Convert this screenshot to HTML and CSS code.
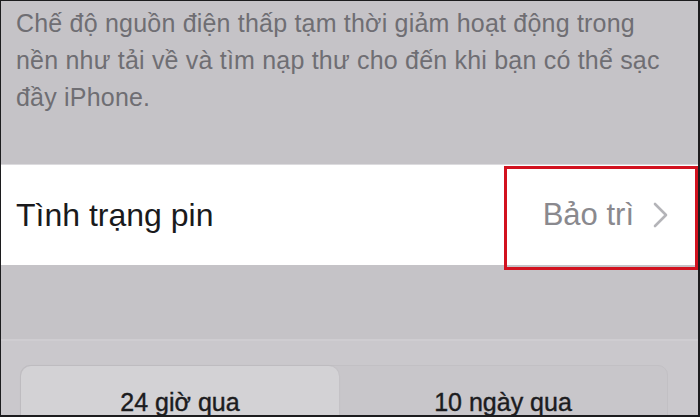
FILE: index.html
```html
<!DOCTYPE html>
<html lang="vi">
<head>
<meta charset="utf-8">
<link rel="stylesheet" href="styles.css">
</head>
<body>
<div class="screen">
  <p class="desc">Chế độ nguồn điện thấp tạm thời giảm hoạt động trong<br>nền như tải về và tìm nạp thư cho đến khi bạn có thể sạc<br>đầy iPhone.</p>
  <div class="row">
    <span class="label">Tình trạng pin</span>
    <span class="value">Bảo trì
      <svg class="chev" width="15" height="26" viewBox="0 0 15 26"><path d="M2 2 L13 13 L2 24" fill="none" stroke="#b4b4b8" stroke-width="2.6" stroke-linecap="round" stroke-linejoin="round"/></svg>
    </span>
    <span class="highlight"></span>
  </div>
  <div class="gap"></div>
  <div class="lower">
    <div class="seg">
      <div class="seg-item active">24 giờ qua</div>
      <div class="seg-item">10 ngày qua</div>
    </div>
  </div>
</div>
</body>
</html>
```
FILE: styles.css
```css
html, body {
  margin: 0;
  padding: 0;
  background: #1c1c1e;
}
.screen {
  margin: 1px 2px 2px 1px;
  height: 414px;
  background: #c5c3c7;
  overflow: hidden;
  font-family: "Liberation Sans", Arial, sans-serif;
  display: flex;
  flex-direction: column;
}
.screen > * {
  flex-shrink: 0;
}
.desc {
  margin: 0;
  padding: 4px 0 0 15px;
  font-size: 25px;
  letter-spacing: 0.2px;
  line-height: 37px;
  color: #6f6e73;
  height: 160px;
  box-sizing: border-box;
  white-space: nowrap;
}
.row {
  position: relative;
  height: 101px;
  background: #ffffff;
  border-top: 1px solid #dcdbde;
  display: flex;
  align-items: center;
  justify-content: space-between;
  padding: 0 30px 0 15px;
  box-sizing: border-box;
  margin-top: 3px;
}
.label {
  font-size: 32px;
  color: #1a1a1c;
}
.value {
  font-size: 31px;
  color: #8a898e;
  display: flex;
  align-items: center;
  gap: 19px;
}
.chev { display: block; }
.highlight {
  position: absolute;
  left: 503px;
  top: 1px;
  width: 194px;
  height: 104px;
  border: 3px solid #d2121f;
  box-sizing: border-box;
}
.gap {
  height: 74px;
  border-bottom: 2px solid #cfcdd1;
}
.lower {
  flex: 1;
  background: #cac8cc;
  padding: 24px 30px 0 19px;
}
.seg {
  display: flex;
  height: 60px;
  border-radius: 10px;
  background: #c8c6ca;
  border: 1px solid #c2c0c4;
}
.seg-item {
  flex: 1;
  text-align: center;
  font-size: 25px;
  color: #1c1c1e;
  padding-top: 22px;
  -webkit-text-stroke: 0.4px #1c1c1e;
}
.seg-item.active {
  background: #d3d2d5;
  border-radius: 10px;
  flex: 0 0 318px;
  box-shadow: 0 0 2px rgba(0,0,0,0.08);
}
```
